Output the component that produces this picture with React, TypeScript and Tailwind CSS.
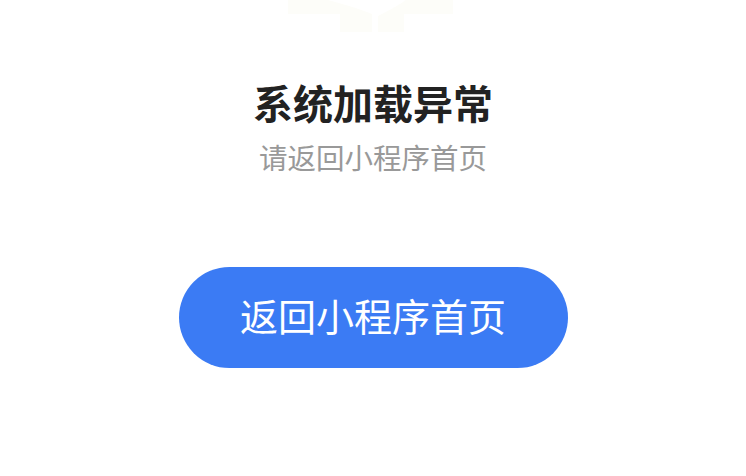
export default function App() {
  return (
    <div
      className="flex h-[476px] w-[746px] flex-col items-center bg-white"
      style={{ fontFamily: '"Noto Sans CJK SC", "Noto Sans", sans-serif' }}
    >
      {/* faint illustration remnant at the top */}
      <svg width="170" height="34" viewBox="0 0 170 34" className="shrink-0">
        <path d="M0 0 H40 Q70 8 84 14 V32 H52 V14 H0 Z" fill="#fdfdf9" />
        <path d="M90 32 V16 Q110 6 118 0 H165 V14 H116 V32 Z" fill="#fdfdf9" />
      </svg>
      <h1 className="mt-[48px] text-[40px] font-bold leading-[40px] text-[#222]">系统加载异常</h1>
      <p className="mt-[21px] text-[28.5px] leading-[28px] text-[#999]">请返回小程序首页</p>
      <button className="mt-[96px] flex h-[101px] w-[389px] items-center justify-center rounded-full bg-[#3b7bf4] pb-[6px] text-[38px] text-white">
        返回小程序首页
      </button>
    </div>
  )
}
